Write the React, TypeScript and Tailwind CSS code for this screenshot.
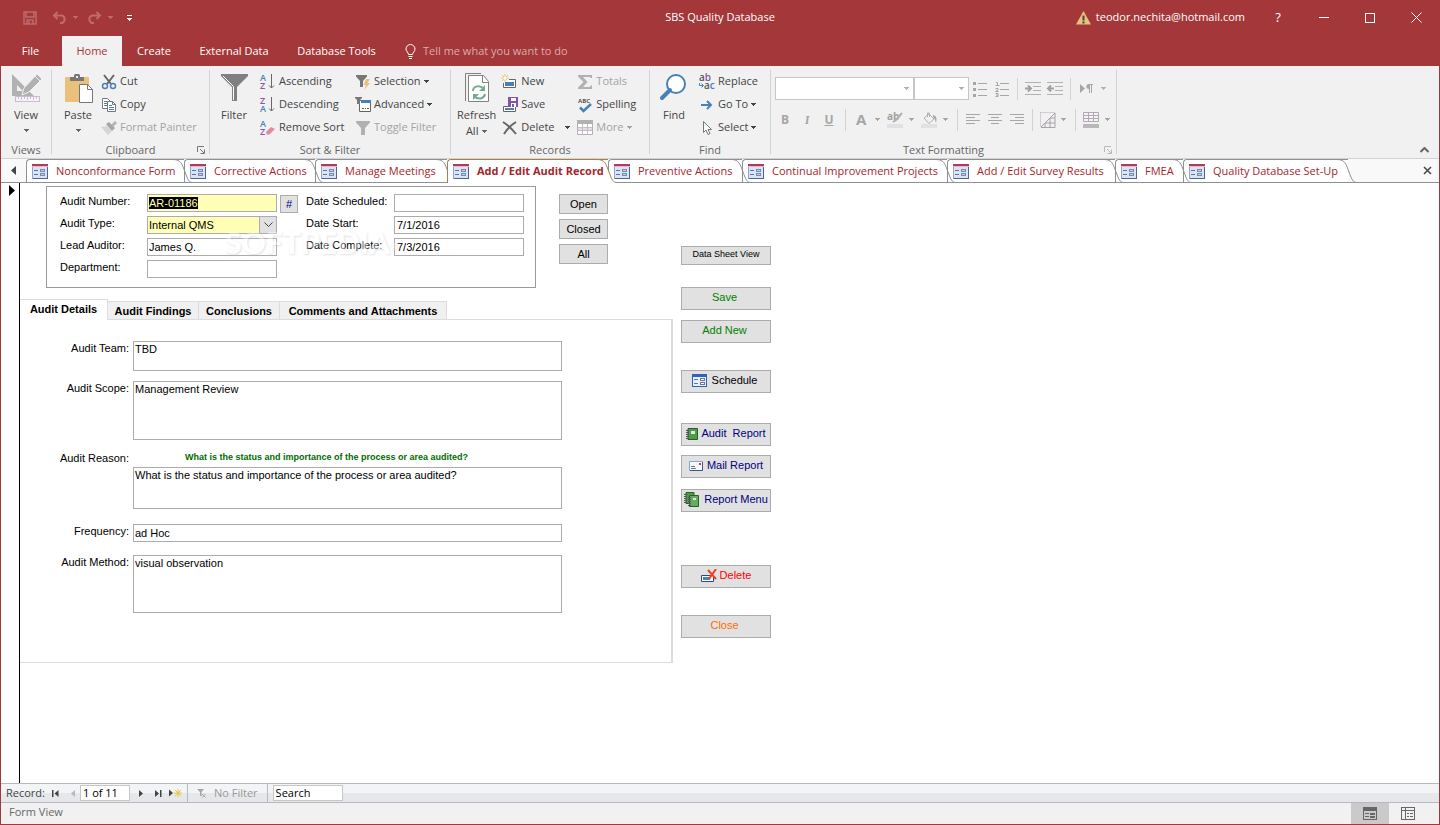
import { useEffect, useRef } from "react";
import type { ReactNode } from "react";

const TABS = [
  { label: "Nonconformance Form", width: "w-[158px]" },
  { label: "Corrective Actions", width: "w-[131px]" },
  { label: "Manage Meetings", width: "w-[132px]" },
  { label: "Add / Edit Audit Record", width: "w-[161px]", active: true },
  { label: "Preventive Actions", width: "w-[134px]" },
  { label: "Continual Improvement Projects", width: "w-[205px]" },
  { label: "Add / Edit Survey Results", width: "w-[168px]" },
  { label: "FMEA", width: "w-[68px]" },
  { label: "Quality Database Set-Up", width: "w-[165px]" },
];

function Caret({ className = "" }: { className?: string }) {
  return (
    <svg width="5" height="3" viewBox="0 0 5 3" className={`shrink-0 ${className}`} shapeRendering="crispEdges">
      <path d="M0 0h5v1H4v1H3v1H2V2H1V1H0z" fill="currentColor" />
    </svg>
  );
}

function Icon({ size = 16, children }: { size?: number; children: ReactNode }) {
  return (
    <svg width={size} height={size} viewBox={`0 0 ${size} ${size}`} fill="none" className="shrink-0 overflow-visible">
      {children}
    </svg>
  );
}

const viewIcon = (
  <Icon size={32}>
    <path d="M2 2v22h22zM7 13l6 6H7z" fill="#b1b1b1" fillRule="evenodd" />
    <path d="M27 2l5 5-13 13-7 3 2-7z" fill="#b1b1b1" stroke="#f1f1f1" />
    <path d="M25 4l5 5" stroke="#f1f1f1" />
    <rect x="5.500" y="24.500" width="24" height="5" fill="#f8f2fa" stroke="#c9bccb" />
    <path d="M8.500 25v2M11.500 25v3M14.500 25v2M17.500 25v3M20.500 25v2M23.500 25v3M26.500 25v2" stroke="#c9bccb" />
  </Icon>
);

const pasteIcon = (
  <Icon size={32}>
    <rect x="3" y="5" width="24" height="25" rx="1" fill="#eac17a" />
    <path d="M8 9V5h4V3.500c0-1 1-1.500 2-1.500h2c1 0 2 .5 2 1.500V5h4v4z" fill="#777" />
    <rect x="14" y="4" width="2" height="2" fill="#eee" />
    <path d="M17.500 12.500h8l5 5v13h-13z" fill="#fff" stroke="#777" />
    <path d="M25.500 12.500v5h5" stroke="#777" />
  </Icon>
);

const filterIcon = (
  <Icon size={32}>
    <path d="M3 2h27v2L19 15v14h-5V15L3 4z" fill="#808080" />
    <path d="M5 4l10.500 10.500V28" stroke="#fff" />
  </Icon>
);

const refreshIcon = (
  <Icon size={32}>
    <path d="M4.500 29V1.500H20" stroke="#808080" />
    <path d="M7.500 3.500h15l5 6v20h-20z" fill="#fff" stroke="#808080" />
    <path d="M21.500 3.500v7h6" stroke="#808080" />
    <path d="M12 19c0-5 7-6.500 10.500-2.500M24 22c-1 5-7 6-10.500 2.500" stroke="#77a98f" strokeWidth="2" />
    <path d="M24 13v6h-6zM12 28v-6h6z" fill="#77a98f" />
  </Icon>
);

const findIcon = (
  <Icon size={32}>
    <circle cx="18" cy="12" r="9" fill="#fff" stroke="#4a80b8" strokeWidth="2" />
    <path d="M12 18L4 26" stroke="#4a80b8" strokeWidth="4" strokeLinecap="round" />
  </Icon>
);

const cutIcon = (
  <Icon>
    <path d="M3 1l7 9M13 1L6 10" stroke="#666" strokeWidth="2" />
    <circle cx="4" cy="12" r="2.500" stroke="#4a80b8" strokeWidth="1.500" />
    <circle cx="12" cy="12" r="2.500" stroke="#4a80b8" strokeWidth="1.500" />
  </Icon>
);

const copyIcon = (
  <Icon>
    <path d="M1.500 1.500h5l3 3v7h-8z" fill="#fff" stroke="#777" />
    <path d="M3 4.500h3M3 6.500h4M3 8.500h4" stroke="#4a80b8" />
    <path d="M6.500 4.500h5l3 3v7h-8z" fill="#fff" stroke="#777" />
    <path d="M11.500 4.500v3h3" stroke="#777" />
    <path d="M8 8.500h3M8 10.500h5M8 12.500h5" stroke="#4a80b8" />
  </Icon>
);

const painterIcon = (
  <Icon>
    <path d="M0 7l6-1 5 5-4 4z" fill="#d8d2da" />
    <path d="M5 4l3-2 6 6-3 3z" fill="#a6a6a6" />
    <path d="M10 5l4-4 2 2-4 4z" fill="#b4b4b4" />
  </Icon>
);

// sort glyphs: two stacked letters with a down arrow or an eraser beside them
function SortIcon({ top, bottom, eraser }: { top: string; bottom: string; eraser?: boolean }) {
  return (
    <Icon>
      <text x="0" y="7" fontSize="9" fontWeight="600" fill={top === "A" ? "#4a80b8" : "#9154a8"}>{top}</text>
      <text x="0" y="15" fontSize="9" fontWeight="600" fill={bottom === "A" ? "#4a80b8" : "#9154a8"}>{bottom}</text>
      {eraser ? (
        <path d="M6 12l5-5 4 2-5 5-3 1z" fill="#e58a97" />
      ) : (
        <path d="M11.500 0v14M9 11.500l2.500 2.500 2.500-2.500" stroke="#666" />
      )}
    </Icon>
  );
}

const selectionIcon = (
  <Icon>
    <path d="M1 1h11v1.500L8 7v6H5V7L1 2.500z" fill="#777" />
    <path d="M11 5h4l-2.500 4H15l-6 7 2-5H8.500z" fill="#eac17a" />
  </Icon>
);

const advancedIcon = (
  <Icon>
    <path d="M4.500 3.500h11v11h-11z" fill="#fff" stroke="#666" />
    <path d="M6 3h10v3H6z" fill="#4a80b8" />
    <path d="M0 0h7v1L5 3v4H2V3L0 1z" fill="#777" />
    <path d="M7 11.500h2M10 11.500h1M12 11.500h2" stroke="#555" />
  </Icon>
);

const toggleIcon = (
  <Icon>
    <path d="M1 1h14v1.500L10 8v7H6V8L1 2.500z" fill="#b1b1b1" />
  </Icon>
);

const newIcon = (
  <Icon>
    <path d="M3 0v8M-1 4h8M0 1l6 6M6 1L0 7" stroke="#eac17a" />
    <circle cx="3" cy="4" r="1.500" fill="#fff" />
    <path d="M7 5.500h6.500v8h-12V9" fill="#fff" stroke="#666" />
    <path d="M3 8h9v4H3z" fill="#4a80b8" />
  </Icon>
);

const saveIcon = (
  <Icon>
    <path d="M1.500 9.500h12v5h-12z" fill="#fff" stroke="#666" />
    <path d="M3 11h9v2H3z" fill="#4a80b8" />
    <path d="M6 0h10v10H6z" fill="#8653a5" />
    <path d="M9 1h5v3H9zM9 6h5v4H9z" fill="#fff" />
    <path d="M10 7h2v3h-2z" fill="#8653a5" />
  </Icon>
);

const deleteIcon = (
  <Icon>
    <path d="M1 2c5 3 9 7 13 12M14 2C9 5 5 9 2 14" stroke="#666" strokeWidth="2" />
  </Icon>
);

const totalsIcon = (
  <Icon>
    <path d="M1 1h14v3h-1.500L13 3H6l4.500 5L6 13h7l.5-1.500H15V15H1v-1.500L6.500 8 1 2.500z" fill="#b1b1b1" />
  </Icon>
);

const spellingIcon = (
  <Icon>
    <text x="1" y="6" fontSize="6" fontWeight="700" fill="#555">ABC</text>
    <path d="M3 10.500l3.500 3.500L14 7" stroke="#4a80b8" strokeWidth="2.500" />
  </Icon>
);

const moreIcon = (
  <Icon>
    <path d="M.5.500h15v14H.500z" fill="#fff" stroke="#b1b1b1" />
    <path d="M0 0h16v4H0z" fill="#b1b1b1" />
    <path d="M1 7h14v4H1z" fill="#e4dce6" />
    <path d="M1 7.500h14M1 10.500h14M5.500 4v11M10.500 4v11" stroke="#c4bfc5" />
  </Icon>
);

const replaceIcon = (
  <Icon>
    <text x="0" y="7" fontSize="10" fontWeight="600" fill="#555">a<tspan fill="#8653a5">b</tspan></text>
    <text x="5" y="15" fontSize="10" fontWeight="600" fill="#555">a<tspan fill="#4a80b8">c</tspan></text>
    <path d="M.5 9v2.500H4M2.500 9.500l2 2-2 2" stroke="#4a80b8" />
  </Icon>
);

const goToIcon = (
  <Icon>
    <path d="M2 8h10M8 4l4 4-4 4" stroke="#4a80b8" strokeWidth="2" />
  </Icon>
);

const selectIcon = (
  <Icon>
    <path d="M4.500 1.500v11l2.500-2.500 2 4.500 2-1-2-4h3.500z" fill="#fff" stroke="#777" />
  </Icon>
);

const formIcon = (
  <svg width="16" height="15" viewBox="0 0 16 15" className="shrink-0" shapeRendering="crispEdges">
    <path d="M0 0h16v15H0z" fill="#93a6c8" />
    <path d="M15 3h1v12H1v-1h14z" fill="#4b6598" />
    <path d="M1 3h14v11H1z" fill="#dbe4f3" />
    <path d="M0 0h16v2H0z" fill="#b23a5e" />
    <path d="M0 2h16v1H0z" fill="#e9b8c5" />
    <path d="M2 6h4v1H2zM2 10h4v1H2z" fill="#5476b0" />
    <path d="M8 5h5v3H8zM8 9h5v3H8z" fill="#7a8cae" />
    <path d="M9 6h3v1H9zM9 10h3v1H9z" fill="#c3cfe4" />
  </svg>
);

function SmallButton({ icon, label, caret, disabled, wide }: {
  icon: ReactNode;
  label: string;
  caret?: boolean;
  disabled?: boolean;
  wide?: boolean;
}) {
  return (
    <button
      type="button"
      disabled={disabled}
      className={`flex h-[23px] items-center whitespace-nowrap ${disabled ? "text-[#a3a3a3]" : "text-[#444]"}`}
    >
      {icon}
      <span className="ml-[3px]">{label}</span>
      {caret && <Caret className={wide ? "ml-[10px]" : "ml-[3px]"} />}
    </button>
  );
}

function BigButton({ icon, label, children }: { icon: ReactNode; label: string; children?: ReactNode }) {
  return (
    <button type="button" className="flex shrink-0 flex-col items-center self-start pt-[2px] text-[#444]">
      {icon}
      <span className="mt-[3px] leading-4">{label}</span>
      {children}
    </button>
  );
}

function Group({ title, width, launcher, faded, children }: {
  title: string;
  width: string;
  launcher?: boolean;
  faded?: boolean;
  children: ReactNode;
}) {
  return (
    <>
      <section aria-label={title} className={`flex shrink-0 flex-col pt-[4px] ${width}`}>
        <div className="flex h-[69px]">{children}</div>
        <div className="relative flex h-[19px] items-center justify-center pt-[3px] text-[#666]">
          {title}
          {launcher && (
            <svg width="8" height="8" viewBox="0 0 8 8" className={`absolute right-1 bottom-1 ${faded ? "text-[#b8b8b8]" : "text-[#777]"}`}>
              <path d="M.5 6V.500H7M3 3l4 4M7.500 3.500v4h-4" fill="none" stroke="currentColor" />
            </svg>
          )}
        </div>
      </section>
      <div className="my-1 w-px shrink-0 bg-[#d2d2d2]" />
    </>
  );
}

function Divider() {
  return <div className="h-[22px] w-px shrink-0 bg-[#d2d2d2]" />;
}

function ListIcon({ kind }: { kind: "bullets" | "numbers" }) {
  return (
    <Icon>
      <path d="M5 2.500h9M5 8.500h9M5 14.500h9" stroke="#a6a6a6" />
      {kind === "bullets" ? (
        <path d="M0 1h3v3H0zM0 7h3v3H0zM0 13h3v3H0z" fill="#a6a6a6" />
      ) : (
        <path d="M1 1.500h1.500V5M.5 4.500h4M.5 7.500h2.500v1.500L.5 10.500h3M.5 12.500h2.500v3H.500M1 14h2" stroke="#a6a6a6" />
      )}
    </Icon>
  );
}

function IndentIcon({ back }: { back?: boolean }) {
  return (
    <Icon>
      <path d="M0 1.500h16M8 5.500h8M8 9.500h8M0 13.500h16" stroke="#b1b1b1" />
      <path d={back ? "M7 7.500H1M4 4.500l-3 3 3 3" : "M0 7.500h6M3 4.500l3 3-3 3"} stroke="#a0a0a0" strokeWidth="2" />
    </Icon>
  );
}

function AlignIcon({ d }: { d: string }) {
  return (
    <Icon size={14}>
      <path d={d} stroke="#a6a6a6" />
    </Icon>
  );
}

function TextFormatting() {
  return (
    <div className="flex flex-col gap-[8px] pt-[7px] pl-1 text-[#b1b1b1]">
      <div className="flex h-[23px] items-center">
        <div className="relative">
          <select aria-label="Font" disabled className="block h-[23px] w-[139px] appearance-none border border-[#c6c6c6] bg-white" />
          <Caret className="absolute top-[10px] right-[5px]" />
        </div>
        <div className="relative">
          <select aria-label="Font size" disabled className="block h-[23px] w-[55px] appearance-none border border-[#c6c6c6] bg-white" />
          <Caret className="absolute top-[10px] right-[5px]" />
        </div>
        <button type="button" disabled aria-label="Bullets" className="ml-1"><ListIcon kind="bullets" /></button>
        <button type="button" disabled aria-label="Numbering" className="mr-[6px] ml-[6px]"><ListIcon kind="numbers" /></button>
        <Divider />
        <button type="button" disabled aria-label="Increase indent" className="ml-[7px]"><IndentIcon /></button>
        <button type="button" disabled aria-label="Decrease indent" className="mr-[7px] ml-[6px]"><IndentIcon back /></button>
        <Divider />
        <button type="button" disabled aria-label="Text direction" className="ml-[9px] flex items-center gap-[8px]">
          <svg width="13" height="10" viewBox="0 0 13 10">
            <path d="M0 0l5 4.500L0 9zM13 0v1h-1v8h-1V1h-1v8H9V5C5.500 5 5.500 0 9 0z" fill="#a6a6a6" />
          </svg>
          <Caret />
        </button>
      </div>
      <div className="flex h-[23px] items-center text-[12px] font-bold text-[#a6a6a6]">
        <button type="button" disabled className="ml-[6px] w-[8px]">B</button>
        <button type="button" disabled className="ml-[14px] w-[8px] font-serif italic">I</button>
        <button type="button" disabled className="mr-[11px] ml-[13px] w-[10px] underline">U</button>
        <Divider />
        <button type="button" disabled aria-label="Font color" className="ml-[10px] flex items-center gap-[9px] text-[15px]">A <Caret /></button>
        <button type="button" disabled aria-label="Text highlight" className="ml-[7px] flex items-center gap-[6px]">
          <Icon>
            <text x="0" y="8" fontSize="10" fontWeight="700" fill="#a0a0a0">ab</text>
            <path d="M15 1l-6 7-3 2" stroke="#b1b1b1" strokeWidth="2" />
            <path d="M0 12h16v4H0z" fill="#e4dfe5" />
          </Icon>
          <Caret />
        </button>
        <button type="button" disabled aria-label="Fill color" className="ml-[7px] flex items-center gap-[6px]">
          <Icon>
            <path d="M3 6l5-4 5 5-5 4.500zM6.500 5V1h2v4" stroke="#b1b1b1" />
            <path d="M12 3c4 1 4 4 3 8-1-3-1-4-3-6z" fill="#a6a6a6" />
            <path d="M0 12h16v4H0z" fill="#e4dfe5" />
          </Icon>
          <Caret />
        </button>
        <div className="ml-[9px]"><Divider /></div>
        <button type="button" disabled aria-label="Align left" className="ml-[8px]"><AlignIcon d="M0 1.500h14M0 4.500h9M0 7.500h14M0 10.500h9" /></button>
        <button type="button" disabled aria-label="Center" className="ml-[8px]"><AlignIcon d="M0 1.500h14M3 4.500h8M0 7.500h14M3 10.500h8" /></button>
        <button type="button" disabled aria-label="Align right" className="mr-[8px] ml-[8px]"><AlignIcon d="M0 1.500h14M5 4.500h9M0 7.500h14M5 10.500h9" /></button>
        <Divider />
        <button type="button" disabled aria-label="Gridlines" className="mr-[9px] ml-[7px] flex items-center gap-[5px]">
          <Icon>
            <path d="M.5.500H15M.5.500V15" stroke="#b1a8b3" strokeDasharray="1 1" />
            <path d="M15 1L1 15M15 1v14.500H1M5 15v-4h10M10 15V6h5" stroke="#a9a0ab" />
          </Icon>
          <Caret />
        </button>
        <Divider />
        <button type="button" disabled aria-label="Alternate row color" className="ml-[7px] flex items-center gap-[6px]">
          <Icon>
            <path d="M.5.500h15v9H.500zM.5 3.500h15M.5 6.500h15M5.500 0v10M10.500 0v10" stroke="#b1a8b3" fill="#f6f2f7" />
            <path d="M0 12h16v4H0z" fill="#b8b8b8" />
          </Icon>
          <Caret />
        </button>
      </div>
    </div>
  );
}

function TitleBar() {
  return (
    <header className="bg-[#a4373a] text-white">
      <div className="grid h-[35px] grid-cols-[1fr_auto_1fr] items-center pb-[2px]">
        <div className="flex items-center pl-[22px] text-[#c06a6c]">
          <button type="button" aria-label="Save">
            <svg width="14" height="14" viewBox="0 0 14 14" className="block">
              <path d="M1 1h12v12H1zM3 1v5h8V1M4 13V9h6v4M6 10v3" fill="none" stroke="currentColor" strokeWidth="1.500" />
            </svg>
          </button>
          <button type="button" aria-label="Undo" className="ml-[15px] flex items-center gap-[6px]">
            <svg width="15" height="13" viewBox="0 0 15 13"><path d="M2 4.500h8a4 4 0 010 7.500H8M5.500 1L2 4.500 5.500 8" fill="none" stroke="currentColor" strokeWidth="2" /></svg>
            <Caret />
          </button>
          <button type="button" aria-label="Redo" className="ml-[9px] flex items-center gap-[6px]">
            <svg width="15" height="13" viewBox="0 0 15 13"><path d="M13 4.500H5a4 4 0 000 7.500h2M9.500 1L13 4.500 9.500 8" fill="none" stroke="currentColor" strokeWidth="2" /></svg>
            <Caret />
          </button>
          <button type="button" aria-label="Customize toolbar" className="ml-[14px] flex flex-col gap-[2px] text-white">
            <span className="h-px w-[5px] bg-white" />
            <Caret />
          </button>
        </div>
        <h1>SBS Quality Database</h1>
        <div className="flex items-center justify-end">
          <svg width="15" height="14" viewBox="0 0 15 14" className="mr-[5px]">
            <path d="M7.500 0L15 13.500H0z" fill="#eac17a" />
            <path d="M7.500 4.500v5M7.500 10.500v2" stroke="#444" strokeWidth="2" />
          </svg>
          <a href="#account">teodor.nechita@hotmail.com</a>
          <button type="button" className="ml-[10px] h-[30px] w-[46px] text-[13px]">?</button>
          <button type="button" aria-label="Minimize" className="flex h-[30px] w-[46px] items-center justify-center">
            <span className="h-px w-[10px] bg-white" />
          </button>
          <button type="button" aria-label="Maximize" className="flex h-[30px] w-[46px] items-center justify-center">
            <span className="size-[10px] border border-white" />
          </button>
          <button type="button" aria-label="Close window" className="flex h-[30px] w-[46px] items-center justify-center">
            <svg width="11" height="11" viewBox="0 0 11 11"><path d="M.5.500l10 10M10.500.500l-10 10" stroke="#fff" /></svg>
          </button>
        </div>
      </div>
      <nav className="flex h-[30px] items-stretch">
        <button type="button" className="w-[61px] pr-[2px]">File</button>
        <button type="button" className="w-[60px] bg-[#f1f1f1] text-[#a4373a]">Home</button>
        <button type="button" className="w-[64px]">Create</button>
        <button type="button" className="w-[96px]">External Data</button>
        <button type="button" className="w-[109px]">Database Tools</button>
        <button type="button" className="ml-[14px] flex items-center gap-[7px] text-[#dbabac]">
          <svg width="11" height="15" viewBox="0 0 11 15" fill="none" stroke="#fff">
            <path d="M3.500 10.500c0-2-2.500-3-2.500-5.500a4.500 4.500 0 019 0c0 2.500-2.500 3.500-2.500 5.500zM3.500 12.500h4M4 14.500h3" />
          </svg>
          Tell me what you want to do
        </button>
      </nav>
    </header>
  );
}

function Ribbon() {
  return (
    <div className="flex h-[93px] border-b border-[#d2d2d2] bg-[#f1f1f1]">
      <Group title="Views" width="w-[50px]">
        <div className="flex w-full justify-center">
          <BigButton icon={viewIcon} label="View"><Caret className="mt-[6px] text-[#666]" /></BigButton>
        </div>
      </Group>
      <Group title="Clipboard" width="w-[157px]" launcher>
        <div className="ml-[10px]">
          <BigButton icon={pasteIcon} label="Paste"><Caret className="mt-[6px] text-[#666]" /></BigButton>
        </div>
        <div className="ml-[7px] flex flex-col items-start">
          <SmallButton icon={cutIcon} label="Cut" />
          <SmallButton icon={copyIcon} label="Copy" />
          <SmallButton icon={painterIcon} label="Format Painter" disabled />
        </div>
      </Group>
      <Group title="Sort & Filter" width="w-[240px]">
        <div className="ml-[8px]">
          <BigButton icon={filterIcon} label="Filter" />
        </div>
        <div className="ml-[10px] flex w-[96px] flex-col items-start">
          <SmallButton icon={<SortIcon top="A" bottom="Z" />} label="Ascending" />
          <SmallButton icon={<SortIcon top="Z" bottom="A" />} label="Descending" />
          <SmallButton icon={<SortIcon top="A" bottom="Z" eraser />} label="Remove Sort" />
        </div>
        <div className="-ml-px flex flex-col items-start">
          <SmallButton icon={selectionIcon} label="Selection" caret />
          <SmallButton icon={advancedIcon} label="Advanced" caret />
          <SmallButton icon={toggleIcon} label="Toggle Filter" disabled />
        </div>
      </Group>
      <Group title="Records" width="w-[198px]">
        <div className="ml-[6px]">
          <BigButton icon={refreshIcon} label="Refresh">
            <span className="flex items-center gap-[4px] leading-4">All <Caret className="text-[#666]" /></span>
          </BigButton>
        </div>
        <div className="ml-[6px] flex w-[75px] flex-col items-start">
          <SmallButton icon={newIcon} label="New" />
          <SmallButton icon={saveIcon} label="Save" />
          <SmallButton icon={deleteIcon} label="Delete" caret wide />
        </div>
        <div className="flex flex-col items-start">
          <SmallButton icon={totalsIcon} label="Totals" disabled />
          <SmallButton icon={spellingIcon} label="Spelling" />
          <SmallButton icon={moreIcon} label="More" caret disabled />
        </div>
      </Group>
      <Group title="Find" width="w-[120px]">
        <div className="ml-[8px]">
          <BigButton icon={findIcon} label="Find" />
        </div>
        <div className="ml-[9px] flex flex-col items-start">
          <SmallButton icon={replaceIcon} label="Replace" />
          <SmallButton icon={goToIcon} label="Go To" caret />
          <SmallButton icon={selectIcon} label="Select" caret />
        </div>
      </Group>
      <Group title="Text Formatting" width="w-[345px]" launcher faded>
        <TextFormatting />
      </Group>
      <button type="button" aria-label="Collapse ribbon" className="mt-auto mr-[10px] mb-[5px] ml-auto">
        <svg width="9" height="6" viewBox="0 0 9 6"><path d="M.5 5l4-4 4 4" fill="none" stroke="#666" strokeWidth="2" /></svg>
      </button>
    </div>
  );
}

function DocumentTabs() {
  return (
    <div className="flex h-[24px] items-stretch border-b border-[#8d9095] bg-[#f9f9f9] pr-[7px]">
      <button type="button" aria-label="Scroll tabs left" className="flex w-[25px] shrink-0 items-center justify-center">
        <svg width="5" height="9" viewBox="0 0 5 9"><path d="M5 0v9L0 4.500z" fill="#444" /></svg>
      </button>
      {TABS.map((tab, i) => (
        <button
          key={tab.label}
          type="button"
          className={`relative -mb-px flex shrink-0 text-[#a4262c] ${tab.width} ${tab.active ? "font-bold" : ""}`}
          style={{ zIndex: tab.active ? 20 : TABS.length - i }}
        >
          <span
            className={`flex h-full flex-1 items-center gap-[8px] rounded-tl-[4px] border-t border-l bg-white pl-[5px] whitespace-nowrap ${
              tab.active ? "border-[#a5804f]" : "border-b border-[#8d9095]"
            }`}
          >
            {formIcon}
            <span className="z-10">{tab.label}</span>
          </span>
          {/* slanted right edge, runs over the start of the following tab */}
          <svg width="20" height="24" viewBox="0 0 20 24" className="-mr-[9px] -ml-[11px] shrink-0" fill="none">
            <path d="M0 .500C8 .500 9 5 12 13C15 21 16 23.500 20 23.500V24H0z" fill="#fff" className={tab.active ? "" : "opacity-0"} />
            <path d="M0 .500C8 .500 9 5 12 13C15 21 16 23.500 20 23.500" stroke={tab.active ? "#a5804f" : "#8d9095"} />
          </svg>
        </button>
      ))}
      <button type="button" aria-label="Close tab" className="ml-auto">
        <svg width="9" height="9" viewBox="0 0 9 9"><path d="M1 1l7 7M8 1L1 8" stroke="#444" strokeWidth="1.500" /></svg>
      </button>
    </div>
  );
}

function DateField({ id, label, value }: { id: string; label: string; value: string }) {
  return (
    <div className="flex h-[22px] items-start">
      <label htmlFor={id} className="w-[88px] leading-[15px]">{label}</label>
      <input id={id} defaultValue={value} className="h-[18px] w-[130px] border border-[#acacac] px-[2px] pb-px" />
    </div>
  );
}

function AuditHeader() {
  const numberRef = useRef<HTMLInputElement | null>(null);

  useEffect(() => {
    numberRef.current?.focus();
    numberRef.current?.select();
  }, []);

  return (
    <div className="relative mt-[3px] ml-[26px] flex h-[102px] w-[490px] border border-[#9a9a9a] pt-[7px] pl-[13px]">
      <div className="w-[246px]">
        <div className="flex h-[22px] items-start">
          <label htmlFor="number" className="w-[87px] leading-[15px]">Audit Number:</label>
          <input
            id="number"
            ref={numberRef}
            defaultValue="AR-01186"
            className="h-[18px] w-[130px] border border-[#acacac] bg-[#ffffb5] px-px pb-px outline-none selection:bg-black selection:text-[#ffffb5]"
          />
          <button type="button" className="mt-px ml-[3px] h-[18px] w-[18px] border border-[#acacac] bg-[#e1e1e1] text-[#000080]">#</button>
        </div>
        <div className="flex h-[22px] items-start">
          <label htmlFor="type" className="w-[87px] leading-[15px]">Audit Type:</label>
          <div className="relative">
            <select id="type" className="block h-[18px] w-[130px] appearance-none border border-[#acacac] bg-[#ffffb5] px-px pb-px">
              <option>Internal QMS</option>
            </select>
            <span className="pointer-events-none absolute top-0 right-0 flex h-[18px] w-[18px] items-center justify-center border border-[#acacac] bg-[#e1e1e1]">
              <svg width="9" height="6" viewBox="0 0 9 6"><path d="M.5.500l4 4 4-4" fill="none" stroke="#444" /></svg>
            </span>
          </div>
        </div>
        <div className="flex h-[22px] items-start">
          <label htmlFor="lead" className="w-[87px] leading-[15px]">Lead Auditor:</label>
          <input id="lead" defaultValue="James Q." className="h-[18px] w-[130px] border border-[#acacac] px-px pb-px" />
        </div>
        <div className="flex h-[22px] items-start">
          <label htmlFor="department" className="w-[87px] leading-[15px]">Department:</label>
          <input id="department" className="h-[18px] w-[130px] border border-[#acacac] px-px pb-px" />
        </div>
      </div>
      <div>
        <DateField id="scheduled" label="Date Scheduled:" value="" />
        <DateField id="start" label="Date Start:" value="7/1/2016" />
        <DateField id="complete" label="Date Complete:" value="7/3/2016" />
      </div>
      <span className="pointer-events-none absolute top-[37px] left-[178px] font-['Lato',sans-serif] text-[30px] leading-9 font-black text-white opacity-40 [text-shadow:1px_1px_2px_#bbb]">
        SOFTPEDIA<sup className="text-[9px]">®</sup>
      </span>
    </div>
  );
}

function MemoRow({ id, label, value, height }: { id: string; label: string; value: string; height: string }) {
  return (
    <div className="flex items-start">
      <label htmlFor={id} className="mr-[4px] w-[109px] text-right leading-[15px]">{label}</label>
      <textarea
        id={id}
        defaultValue={value}
        className={`block w-[429px] resize-none overflow-hidden border border-[#acacac] px-px leading-[14px] ${height}`}
      />
    </div>
  );
}

function AuditDetails() {
  return (
    <div>
      <div role="tablist" className="flex h-[20px] items-end text-[11px] leading-4 font-bold">
        <button type="button" role="tab" aria-selected="true" className="z-10 -mb-px h-[21px] w-[88px] border-t border-r border-[#dcdcdc] bg-white pb-[3px]">Audit Details</button>
        <button type="button" role="tab" className="h-[18px] w-[91px] border-t border-r border-[#dcdcdc] bg-[#f0f0f0]">Audit Findings</button>
        <button type="button" role="tab" className="h-[18px] w-[81px] border-t border-r border-[#dcdcdc] bg-[#f0f0f0]">Conclusions</button>
        <button type="button" role="tab" className="h-[18px] w-[167px] border-t border-r border-[#dcdcdc] bg-[#f0f0f0]">Comments and Attachments</button>
      </div>
      <div className="h-[344px] border-t border-r-2 border-b border-[#dcdcdc] pt-[21px]">
        <MemoRow id="team" label="Audit Team:" value="TBD" height="h-[30px]" />
        <div className="mt-[10px]">
          <MemoRow id="scope" label="Audit Scope:" value="Management Review" height="h-[59px]" />
        </div>
        <div className="mt-[9px] flex h-[18px] items-center">
          <label htmlFor="reason" className="w-[109px] text-right">Audit Reason:</label>
          <p className="ml-[56px] text-[9px] font-bold text-[#006c00]">What is the status and importance of the process or area audited?</p>
        </div>
        <textarea
          id="reason"
          defaultValue="What is the status and importance of the process or area audited?"
          className="ml-[113px] block h-[42px] w-[429px] resize-none overflow-hidden border border-[#acacac] px-px leading-[14px]"
        />
        <div className="mt-[15px] flex items-start">
          <label htmlFor="frequency" className="mr-[4px] w-[109px] text-right leading-[15px]">Frequency:</label>
          <input id="frequency" defaultValue="ad Hoc" className="h-[18px] w-[429px] border border-[#acacac] px-px pb-px" />
        </div>
        <div className="mt-[13px]">
          <MemoRow id="method" label="Audit Method:" value="visual observation" height="h-[58px]" />
        </div>
      </div>
    </div>
  );
}

const scheduleIcon = (
  <svg width="15" height="13" viewBox="0 0 15 13" shapeRendering="crispEdges">
    <path d="M0 0h15v13H0z" fill="#3262b5" />
    <path d="M1 3h13v9H1z" fill="#e6effc" />
    <path d="M2 5h4v1H2zM2 9h4v1H2zM8 4h5v3H8zM8 8h5v3H8z" fill="#6a7a96" />
    <path d="M9 5h3v1H9zM9 9h3v1H9z" fill="#fff" />
  </svg>
);

const bookIcon = (
  <svg width="12" height="12" viewBox="0 0 12 12">
    <path d="M2 .500h9.500v11H2z" fill="#4f9a4f" stroke="#28602a" />
    <path d="M5 3h4v3H5z" fill="#d6efd3" />
    <path d="M0 2.500h3M0 4.500h3M0 6.500h3M0 8.500h3M0 10.500h3" stroke="#555" />
  </svg>
);

const booksIcon = (
  <svg width="16" height="15" viewBox="0 0 16 15">
    <path d="M2 .500h8v11H2z" fill="#4f9a4f" stroke="#28602a" />
    <path d="M5.500 3.500h9v11h-9z" fill="#62ad5e" stroke="#28602a" />
    <path d="M9 6h3v2H9z" fill="#d6efd3" />
    <path d="M0 2.500h3M0 4.500h3M0 6.500h3M0 8.500h3M0 10.500h3M4 5.500h3M4 7.500h3M4 9.500h3M4 11.500h3M4 13.500h3" stroke="#555" />
  </svg>
);

const mailIcon = (
  <svg width="14" height="10" viewBox="0 0 14 10">
    <path d="M.5.500h13v9H.500z" fill="#f5f9ff" stroke="#8ba3c9" />
    <path d="M13.500 1v8.500H1" stroke="#3d5688" fill="none" />
    <path d="M2 5.500h4M2 7.500h5" stroke="#777" />
    <path d="M10 2h2v2h-2z" fill="#d33b20" />
  </svg>
);

const deleteRecordIcon = (
  <svg width="16" height="14" viewBox="0 0 16 14">
    <path d="M.5 6.500h12v6H.500z" fill="#fff" stroke="#2a4a86" />
    <path d="M2 8h7v3H2z" fill="#4a7edb" />
    <path d="M7 1l8 9M15 0L8 10" stroke="#ef4023" strokeWidth="2" />
  </svg>
);

const SIDE_BUTTONS = [
  { label: "Data Sheet View", style: "h-[19px] text-[9px] text-black" },
  { label: "Save", style: "mt-[22px] h-[23px] pr-[3px] text-[#008000]" },
  { label: "Add New", style: "mt-[10px] h-[23px] pr-[3px] text-[#008000]" },
  { label: "Schedule", style: "mt-[27px] h-[23px] gap-[5px] pr-[3px] text-[11px] text-black", icon: scheduleIcon },
  { label: "Audit\u00a0 Report", style: "mt-[30px] h-[23px] gap-[3px] text-[11px] text-[#000080]", icon: bookIcon },
  { label: "Mail Report", style: "mt-[9px] h-[23px] gap-[4px] text-[11px] text-[#000080]", icon: mailIcon },
  { label: "Report Menu", style: "mt-[11px] h-[23px] gap-[4px] text-[11px] text-[#000080]", icon: booksIcon },
  { label: "Delete", style: "mt-[53px] h-[23px] gap-[3px] text-[#ff0000]", icon: deleteRecordIcon },
  { label: "Close", style: "mt-[27px] h-[23px] pr-[3px] text-[#ff6a00]" },
];

function AuditForm() {
  return (
    <main className="flex flex-1 bg-white font-['Liberation_Sans',Arial,sans-serif] text-[11px] text-black">
      <div className="w-[19px] shrink-0 border-r border-black pt-[2px] pl-[8px]">
        <svg width="6" height="11" viewBox="0 0 6 11"><path d="M0 0l6 5.500L0 11z" /></svg>
      </div>
      <div className="w-[653px] shrink-0">
        <div className="flex">
          <AuditHeader />
          <div className="mt-[11px] ml-[23px] flex flex-col gap-[5px]">
            {["Open", "Closed", "All"].map((name) => (
              <button key={name} type="button" className="h-[20px] w-[49px] border border-[#acacac] bg-[#e1e1e1]">{name}</button>
            ))}
          </div>
        </div>
        <div className="mt-[11px]">
          <AuditDetails />
        </div>
      </div>
      <div className="ml-[8px] flex w-[90px] shrink-0 flex-col pt-[63px]">
        {SIDE_BUTTONS.map((b) => (
          <button
            key={b.label}
            type="button"
            className={`flex shrink-0 items-center justify-center border border-[#acacac] bg-[#e1e1e1] pb-[2px] whitespace-nowrap ${b.style}`}
          >
            {b.icon}
            {b.label}
          </button>
        ))}
      </div>
    </main>
  );
}

function RecordBar() {
  return (
    <div className="flex h-[20px] items-center border-y border-[#b6bac0] bg-linear-to-b from-[#f3f4f6] from-50% to-[#e5e7ea] to-50% text-[#444]">
      <label htmlFor="record" className="w-[51px] pl-[5px]">Record:</label>
      <button type="button" aria-label="First record">
        <svg width="7" height="7" viewBox="0 0 7 7"><path d="M0 0h1.500v7H0zM6.500 0v7L2.500 3.500z" fill="#444" /></svg>
      </button>
      <button type="button" aria-label="Previous record" className="mr-[5px] ml-[12px]">
        <svg width="4" height="7" viewBox="0 0 4 7"><path d="M4 0v7L0 3.500z" fill="#b8b8b8" /></svg>
      </button>
      <input id="record" defaultValue="1 of 11" className="h-[16px] w-[50px] border border-[#c6c6c6] bg-white px-[2px] text-black" />
      <button type="button" aria-label="Next record" className="ml-[9px]">
        <svg width="4" height="7" viewBox="0 0 4 7"><path d="M0 0v7l4-3.500z" fill="#444" /></svg>
      </button>
      <button type="button" aria-label="Last record" className="ml-[12px]">
        <svg width="7" height="7" viewBox="0 0 7 7"><path d="M5 0h1.500v7H5zM0 0v7l4-3.500z" fill="#444" /></svg>
      </button>
      <button type="button" aria-label="New record" className="mr-[5px] ml-[7px]">
        <svg width="13" height="8" viewBox="0 0 13 8">
          <path d="M0 .500v7L4 4z" fill="#444" />
          <path d="M9 0v8M5 4h8M6 1l6 6M12 1L6 7" stroke="#e8c53f" />
        </svg>
      </button>
      <div className="h-full w-px bg-[#b6bac0]" />
      <button type="button" disabled className="flex items-center px-[9px] text-[#999]">
        <svg width="9" height="9" viewBox="0 0 9 9" className="mr-[8px]">
          <path d="M0 0h7L4.500 3v4H3V3z" fill="#a5a5a5" />
          <path d="M5 5l3.500 3.500M8.500 5L5 8.500" stroke="#a5a5a5" />
        </svg>
        No Filter
      </button>
      <div className="h-full w-px bg-[#b6bac0]" />
      <input aria-label="Search" defaultValue="Search" className="ml-[5px] h-[16px] w-[70px] border border-[#c6c6c6] bg-white px-[2px] text-black" />
    </div>
  );
}

function StatusBar() {
  return (
    <footer className="flex h-[21px] items-stretch bg-[#f1f1f1] text-[#666]">
      <span className="pl-[8px] leading-[18px]">Form View</span>
      <button type="button" aria-label="Form view" className="ml-auto flex w-[38px] items-center justify-center bg-[#cacaca]">
        <svg width="14" height="13" viewBox="0 0 14 13" shapeRendering="crispEdges">
          <path d="M0 0h14v13H0zM1 4v8h12V4z" fill="#666" fillRule="evenodd" />
          <path d="M2 6h4v1H2zM2 9h4v1H2zM7 6h5v2H7zM7 9h5v2H7z" fill="#666" />
        </svg>
      </button>
      <button type="button" aria-label="Layout view" className="mr-[12px] flex w-[38px] items-center justify-center">
        <svg width="14" height="13" viewBox="0 0 14 13" shapeRendering="crispEdges">
          <path d="M0 0h14v13H0zM1 1v2h3V1zM5 1v2h8V1zM1 4v8h3V4zM5 4v8h8V4z" fill="#666" fillRule="evenodd" />
          <path d="M6 6h2v1H6zM9 6h3v1H9zM6 9h2v1H6zM9 9h3v1H9z" fill="#666" />
        </svg>
      </button>
    </footer>
  );
}

export default function App() {
  return (
    <div className="flex min-h-screen flex-col border border-[#a4373a] font-['Open_Sans','Noto_Sans',sans-serif] text-[11px]">
      <TitleBar />
      <Ribbon />
      <DocumentTabs />
      <AuditForm />
      <RecordBar />
      <StatusBar />
    </div>
  );
}
